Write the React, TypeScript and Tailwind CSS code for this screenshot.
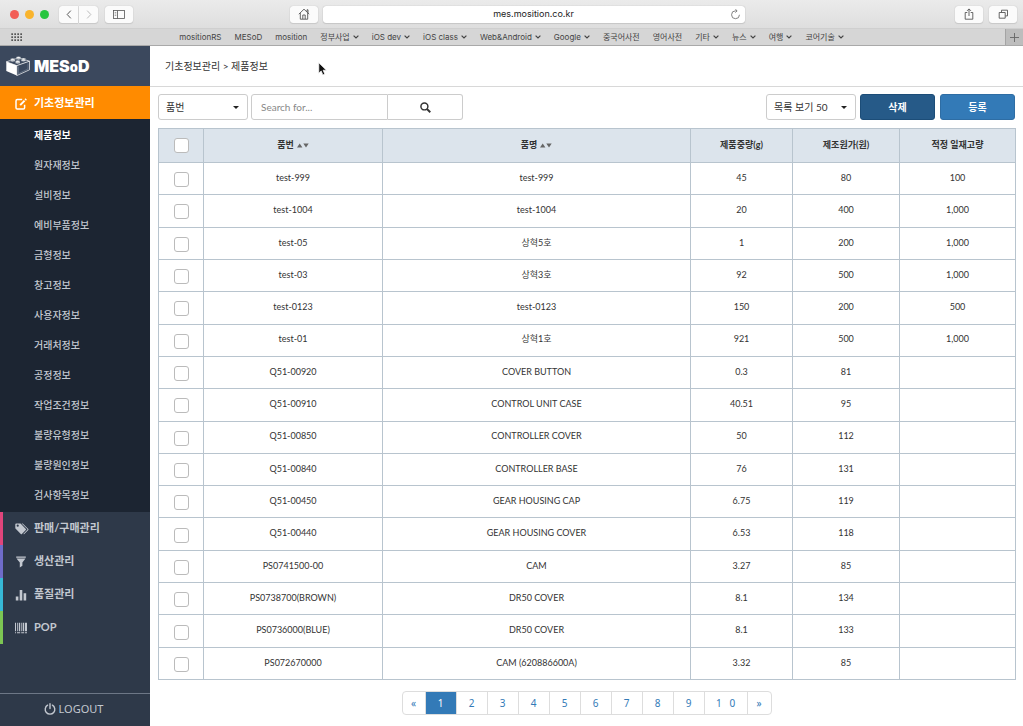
import type { ReactNode } from "react";

type Bookmark = { label: string; menu?: boolean };

const bookmarks: Bookmark[] = [
  { label: "mositionRS" },
  { label: "MESoD" },
  { label: "mosition" },
  { label: "정부사업", menu: true },
  { label: "iOS dev", menu: true },
  { label: "iOS class", menu: true },
  { label: "Web&Android", menu: true },
  { label: "Google", menu: true },
  { label: "중국어사전" },
  { label: "영어사전" },
  { label: "기타", menu: true },
  { label: "뉴스", menu: true },
  { label: "여행", menu: true },
  { label: "코어기술", menu: true },
];

const subMenu = [
  "제품정보",
  "원자재정보",
  "설비정보",
  "예비부품정보",
  "금형정보",
  "창고정보",
  "사용자정보",
  "거래처정보",
  "공정정보",
  "작업조건정보",
  "불량유형정보",
  "불량원인정보",
  "검사항목정보",
];

const rows: string[][] = [
  ["test-999", "test-999", "45", "80", "100"],
  ["test-1004", "test-1004", "20", "400", "1,000"],
  ["test-05", "상혁5호", "1", "200", "1,000"],
  ["test-03", "상혁3호", "92", "500", "1,000"],
  ["test-0123", "test-0123", "150", "200", "500"],
  ["test-01", "상혁1호", "921", "500", "1,000"],
  ["Q51-00920", "COVER BUTTON", "0.3", "81", ""],
  ["Q51-00910", "CONTROL UNIT CASE", "40.51", "95", ""],
  ["Q51-00850", "CONTROLLER COVER", "50", "112", ""],
  ["Q51-00840", "CONTROLLER BASE", "76", "131", ""],
  ["Q51-00450", "GEAR HOUSING CAP", "6.75", "119", ""],
  ["Q51-00440", "GEAR HOUSING COVER", "6.53", "118", ""],
  ["PS0741500-00", "CAM", "3.27", "85", ""],
  ["PS0738700(BROWN)", "DR50 COVER", "8.1", "134", ""],
  ["PS0736000(BLUE)", "DR50 COVER", "8.1", "133", ""],
  ["PS072670000", "CAM (620886600A)", "3.32", "85", ""],
];

const columns = [
  { label: "품번", sortable: true },
  { label: "품명", sortable: true },
  { label: "제품중량(g)", sortable: false },
  { label: "제조원가(원)", sortable: false },
  { label: "적정 일재고량", sortable: false },
];

function ToolbarButton({ label, className, children }: { label: string; className: string; children: ReactNode }) {
  return (
    <button
      aria-label={label}
      className={`flex h-[17px] items-center justify-center bg-[#fbfbfb] text-[#555] shadow-[0_0_1px_#aaa,0_1px_1px_#ccc] ${className}`}
    >
      {children}
    </button>
  );
}

function BrowserChrome() {
  return (
    <header className="font-['Inter','Noto_Sans_CJK_KR',sans-serif]">
      <div className="flex h-7 items-center bg-linear-to-b from-[#ebebeb] to-[#dedede] pr-[6px] pl-[10px]">
        <div className="flex flex-1 items-center">
          <div className="flex gap-[6px]">
            <span className="size-[9px] rounded-full bg-[#f25e57]" />
            <span className="size-[9px] rounded-full bg-[#f9b42d]" />
            <span className="size-[9px] rounded-full bg-[#27c53f]" />
          </div>
          <div className="ml-[10px] flex gap-px">
            <ToolbarButton label="뒤로" className="w-[19px] rounded-l-[3px]">
              <svg viewBox="0 0 6 10" className="h-[9px] w-[6px]" fill="none" stroke="currentColor" strokeWidth="1.1">
                <path d="M5 .7 1 5l4 4.3" />
              </svg>
            </ToolbarButton>
            <ToolbarButton label="앞으로" className="w-[19px] rounded-r-[3px]">
              <svg viewBox="0 0 6 10" className="h-[9px] w-[6px]" fill="none" stroke="#bbb" strokeWidth="1.1">
                <path d="m1 .7 4 4.3-4 4.3" />
              </svg>
            </ToolbarButton>
          </div>
          <ToolbarButton label="사이드바" className="ml-[7px] w-[28px] rounded-[3px]">
            <svg viewBox="0 0 12 9" className="h-[9px] w-[12px]" fill="none" stroke="currentColor" strokeWidth=".8">
              <rect x=".5" y=".5" width="11" height="8" />
              <path d="M4.5.5v8" />
              <path d="M1.7 2.5h1.6M1.7 4h1.6M1.7 5.5h1.6" strokeWidth=".5" />
            </svg>
          </ToolbarButton>
        </div>
        <ToolbarButton label="홈" className="ml-2 w-[28px] rounded-[3px]">
          <svg viewBox="0 0 12 12" className="size-[12px]" fill="none" stroke="currentColor" strokeWidth=".9">
            <path d="M.8 6.2 6 1.2l5.2 5M2.3 5v6.2h7.4V5M9 4V1.8h1V5M4.8 11V7h2.4v4" />
          </svg>
        </ToolbarButton>
        <div className="ml-[5px] flex h-[17px] w-[42%] items-center rounded-[3px] bg-white pr-[4px] shadow-[0_0_1px_#999,0_1px_1px_#ccc]">
          <input
            aria-label="주소"
            defaultValue="mes.mosition.co.kr"
            className="min-w-0 flex-1 bg-transparent pl-[14px] text-center text-[9px] text-[#222] outline-none"
          />
          <button aria-label="새로 고침" className="text-[#777]">
            <svg viewBox="0 0 12 12" className="size-[11px]" fill="none" stroke="currentColor" strokeWidth="1">
              <path d="M10.3 6.3A4.3 4.3 0 1 1 6 2h1.6M5.8.2l2 1.8-2 1.9" />
            </svg>
          </button>
        </div>
        <div className="flex flex-1 justify-end gap-[6px]">
          <ToolbarButton label="공유" className="w-[28px] rounded-[3px]">
            <svg viewBox="0 0 10 12" className="h-[12px] w-[10px]" fill="none" stroke="currentColor" strokeWidth=".9">
              <path d="M3.3 4.5H1.2v6.7h7.6V4.5H6.7M5 8V1M3 2.9l2-2 2 2" />
            </svg>
          </ToolbarButton>
          <ToolbarButton label="탭 보기" className="w-[28px] rounded-[3px]">
            <svg viewBox="0 0 11 10" className="h-[10px] w-[11px]" fill="none" stroke="currentColor" strokeWidth=".9">
              <path d="M1.2 3.5h6v5.7h-6zM3.5 3.3V1.2h6v5.7H7.4" />
            </svg>
          </ToolbarButton>
        </div>
      </div>
      <div className="flex h-[18px] items-stretch border-t border-b border-t-[#cfcfcf] border-b-[#a9a9a9] bg-[#d6d6d6]">
        <button aria-label="즐겨찾기" className="w-[18px] pl-[11px]">
          <svg viewBox="0 0 12 9" className="h-[9px] w-[12px]" fill="#555">
            {[0, 1, 2].map((y) =>
              [0, 1, 2, 3].map((x) => <rect key={`${x}-${y}`} x={x * 3 + 0.3} y={y * 3 + 0.3} width="1.7" height="1.7" />),
            )}
          </svg>
        </button>
        <nav className="flex flex-1 items-center justify-center gap-[13px] text-[8px] text-[#444]">
          {bookmarks.map((b) => (
            <a key={b.label} href="#" className="flex items-center gap-[3px] whitespace-nowrap">
              {b.label}
              {b.menu && (
                <svg viewBox="0 0 6 4" className="h-[4px] w-[6px]" fill="none" stroke="currentColor" strokeWidth="1.2">
                  <path d="m.6.6 2.4 2.4L5.4.6" />
                </svg>
              )}
            </a>
          ))}
        </nav>
        <button aria-label="새 탭" className="flex w-[18px] items-center justify-center border-l border-[#a4a4a4] bg-[#bdbdbd]">
          <svg viewBox="0 0 9 9" className="size-[9px]" stroke="#666" strokeWidth=".9">
            <path d="M4.5 0v9M0 4.5h9" />
          </svg>
        </button>
      </div>
    </header>
  );
}

function BrickLogo() {
  return (
    <svg viewBox="0 0 24 20" className="h-[20px] w-[24px]">
      <path d="M.3 5.8 10.8 9.6v10L.3 15z" fill="#fff" />
      <path d="M.3 5.8 13 1.8l10.5 3.4v8.6L10.8 19.6v-10z" fill="none" stroke="#fff" strokeWidth=".7" strokeLinejoin="round" />
      <path d="M10.8 9.6 23.5 5.2" stroke="#fff" strokeWidth=".8" fill="none" />
      <path d="M12.4 10.6v7l9.6-4.6V7.4" stroke="#8592a6" strokeWidth=".5" fill="none" />
      <g fill="#fff" stroke="#3b485d" strokeWidth=".4">
        <path d="M10.2 1.5v1.3c0 1.2 4.6 1.2 4.6 0V1.5z" />
        <ellipse cx="12.5" cy="1.4" rx="2.3" ry="1" />
        <path d="M4.4 3.4v1.4c0 1.2 4.6 1.2 4.6 0V3.4z" />
        <ellipse cx="6.7" cy="3.3" rx="2.3" ry="1" />
        <path d="M15.2 3.2v1.4c0 1.2 4.6 1.2 4.6 0V3.2z" />
        <ellipse cx="17.5" cy="3.1" rx="2.3" ry="1" />
        <path d="M9.4 5.4v1.4c0 1.2 4.6 1.2 4.6 0V5.4z" />
        <ellipse cx="11.7" cy="5.3" rx="2.3" ry="1" />
      </g>
    </svg>
  );
}

const mainMenu: { label: string; accent: string; icon: ReactNode }[] = [
  {
    label: "판매/구매관리",
    accent: "border-[#e0457b]",
    icon: (
      <svg viewBox="0 0 14 12" className="h-[12px] w-[14px]" fill="currentColor">
        <path
          fillRule="evenodd"
          d="M.3 1.3c0-.5.3-.9.8-.9h3.8c.3 0 .7.1.9.4l5 5.1c.3.3.3.8 0 1.1l-3.9 4c-.3.3-.8.3-1.1 0L.7 5.8a1.2 1.2 0 0 1-.4-.9zm2.4.3a1.1 1.1 0 1 0 0 2.2 1.1 1.1 0 0 0 0-2.2z"
        />
        <path d="M6.6.5h.7c.3 0 .6.1.9.4l5.1 5c.3.3.3.8 0 1.1l-4 4c-.3.3-.7.3-1 .1l4-4.3c.2-.2.2-.5 0-.8z" />
      </svg>
    ),
  },
  {
    label: "생산관리",
    accent: "border-[#6f6cc9]",
    icon: (
      <svg viewBox="0 0 12 12" className="size-[12px]" fill="currentColor">
        <path d="M1.2.6h9.6v1.2H1.2zM1.5 2.4h9L7.4 6.6v3.2L4.8 11.6v-5z" />
      </svg>
    ),
  },
  {
    label: "품질관리",
    accent: "border-[#36b8d6]",
    icon: (
      <svg viewBox="0 0 12 12" className="size-[12px]" fill="currentColor">
        <path d="M.8 7.5h2.6v4H.8zM4.7 1h2.6v10.5H4.7zM8.6 4.3h2.6v7.2H8.6z" />
      </svg>
    ),
  },
  {
    label: "POP",
    accent: "border-[#7cc653]",
    icon: (
      <svg viewBox="0 0 12 12" className="size-[12px]" fill="currentColor">
        <path d="M0 .8h1v8.4H0zM2 .8h.8v8.4H2zM3.8.8h1.4v8.4H3.8zM6.2.8h.7v8.4h-.7zM7.7.8h1.5v8.4H7.7zM10 .8h2v8.4h-2zM0 10.2h1v1H0zM2 10.2h3.2v1H2zM6.2 10.2h3v1h-3zM10 10.2h2v1h-2z" />
      </svg>
    ),
  },
];

function Sidebar() {
  return (
    <aside className="flex w-[150px] shrink-0 flex-col bg-[#2e3949] text-[#c3c8d0]">
      <a href="#" className="flex h-10 items-center gap-[4px] bg-[#3b485d] pl-[6px] text-white">
        <BrickLogo />
        <span className="font-['Inter',sans-serif] text-[16px] font-black">
          MES<span className="text-[13px]">o</span>D
        </span>
      </a>
      <a href="#" className="flex h-[33px] items-center gap-[7px] bg-[#ff8b00] pt-[2px] pl-[15px] text-[11px] font-bold text-white">
        <svg viewBox="0 0 12 12" className="size-[12px]" fill="none" stroke="currentColor" strokeWidth="1.5">
          <path d="M7.2 1.6H2.3a1.3 1.3 0 0 0-1.3 1.3v6.8A1.3 1.3 0 0 0 2.3 11h6a1.3 1.3 0 0 0 1.3-1.3V6.8" />
          <path d="M5.2 7.1 9.6 2.6" strokeWidth="2" />
          <path d="m10.2 2 1-1" strokeWidth="2" />
        </svg>
        기초정보관리
      </a>
      <ul className="bg-[#1c2532] pt-px pb-[2px] text-[10px] font-medium">
        {subMenu.map((item, i) => (
          <li key={item}>
            <a href="#" className={`flex h-[30px] items-center pl-[34px] ${i === 0 ? "font-bold text-white" : "text-[#c3c8d0]"}`}>
              {item}
            </a>
          </li>
        ))}
      </ul>
      <nav className="flex-1">
        {mainMenu.map((m) => (
          <a key={m.label} href="#" className={`flex h-[33px] items-center border-l-[3px] pl-[12px] text-[11px] font-bold ${m.accent}`}>
            <span className="flex w-[19px] items-center">{m.icon}</span>
            {m.label}
          </a>
        ))}
      </nav>
      <button className="flex h-[33px] items-center justify-center gap-[3px] border-t border-[#6d7786] pr-[3px] pb-[2px] font-['Noto_Sans',sans-serif] text-[11px]">
        <svg viewBox="0 0 12 12" className="size-[12px]" fill="none" stroke="currentColor" strokeWidth="1.4" strokeLinecap="round">
          <path d="M3.6 2.2a4.8 4.8 0 1 0 4.8 0M6 .8v4.8" />
        </svg>
        LOGOUT
      </button>
    </aside>
  );
}

function Dropdown({ label, value }: { label: string; value: string }) {
  return (
    <div className="relative w-[90px]">
      <select
        aria-label={label}
        className="block h-[26px] w-full appearance-none rounded-[3px] border border-[#ccc] bg-white pl-[7px] text-[10px] font-normal text-[#333]"
      >
        <option>{value}</option>
      </select>
      <svg viewBox="0 0 6 3" className="pointer-events-none absolute top-[12px] right-[9px] h-[3px] w-[6px]" fill="#222">
        <path d="M0 0h6L3 3z" />
      </svg>
    </div>
  );
}

function Check({ label }: { label: string }) {
  return (
    <input
      type="checkbox"
      aria-label={label}
      className="mx-auto block size-[15px] appearance-none rounded-[3px] border border-[#bbb] bg-white checked:bg-[#337ab7]"
    />
  );
}

function ProductTable() {
  return (
    <table className="w-full table-fixed border-collapse text-center text-[9px] text-[#333]">
      <colgroup>
        <col className="w-[45px]" />
        <col className="w-[179px]" />
        <col className="w-[308px]" />
        <col className="w-[102px]" />
        <col className="w-[107px]" />
        <col className="w-[116px]" />
      </colgroup>
      <thead>
        <tr className="h-[34px] bg-[#dce4ec]">
          <th className="border border-[#b8c4ce] p-0">
            <Check label="전체 선택" />
          </th>
          {columns.map((c) => (
            <th key={c.label} className="border border-[#b8c4ce] p-0 pb-[2px] font-bold">
              {c.label}
              {c.sortable && (
                <svg viewBox="0 0 12 5" className="ml-[3px] inline h-[5px] w-[12px] align-baseline" fill="#666">
                  <path d="M0 4.5h5.4L2.7.5zM6.3.5h5.4L9 4.5z" />
                </svg>
              )}
            </th>
          ))}
        </tr>
      </thead>
      <tbody>
        {rows.map((r) => (
          <tr key={r[0]}>
            <td className="border border-[#b8c4ce] p-0 pt-[2px]">
              <Check label={r[0]} />
            </td>
            {r.map((cell, i) => (
              <td key={i} className="border border-[#b8c4ce] p-0 pb-[2px]">
                {cell}
              </td>
            ))}
          </tr>
        ))}
      </tbody>
    </table>
  );
}

function Pagination() {
  const pages = ["1", "2", "3", "4", "5", "6", "7", "8", "9"];
  return (
    <nav className="mt-[11px] flex justify-center font-['Noto_Sans',sans-serif] text-[10px] text-[#337ab7]">
      <div className="flex h-[24px] divide-x divide-[#ddd] overflow-hidden rounded-[4px] border border-[#ddd]">
        <a href="#" aria-label="이전" className="flex w-[23px] items-center justify-center">
          «
        </a>
        {pages.map((p) => (
          <a key={p} href="#" className={`flex w-[31px] items-center justify-center ${p === "1" ? "bg-[#337ab7] text-white" : ""}`}>
            {p}
          </a>
        ))}
        <a href="#" className="flex w-[43px] items-center justify-center whitespace-pre">
          {"1   0"}
        </a>
        <a href="#" aria-label="다음" className="flex w-[23px] items-center justify-center">
          »
        </a>
      </div>
    </nav>
  );
}

export default function App() {
  return (
    <div className="flex min-h-screen flex-col bg-white font-['Lato','Noto_Sans_CJK_KR',sans-serif]">
      <BrowserChrome />
      <div className="flex flex-1">
        <Sidebar />
        <main className="flex min-w-0 flex-1 flex-col">
          <div className="relative flex h-[41px] items-center border-b border-[#d8d8d8] pl-[15px] text-[10px] text-[#333]">
            기초정보관리 &gt; 제품정보
            <svg viewBox="0 0 9 14" className="absolute top-[16px] left-[168px] h-[14px] w-[9px]" fill="#111" stroke="#fff" strokeWidth=".7">
              <path d="M.8.8v10.4l2.4-2.3 1.7 4 1.9-.8-1.7-3.9h3.3z" />
            </svg>
          </div>
          <div className="flex flex-1 flex-col px-2 pt-[7px] pb-[11px]">
            <div className="flex h-[26px] items-stretch justify-between">
              <form className="flex gap-[3px]">
                <Dropdown label="검색 항목" value="품번" />
                <div className="flex">
                  <input
                    aria-label="검색어"
                    placeholder="Search for..."
                    className="w-[137px] rounded-l-[3px] border border-[#ccc] px-[9px] text-[10px] placeholder:text-[#888]"
                  />
                  <button
                    type="button"
                    aria-label="검색"
                    className="flex w-[75px] items-center justify-center rounded-r-[3px] border border-l-0 border-[#ccc] text-[#333]"
                  >
                    <svg viewBox="0 0 12 12" className="size-[11px]" fill="none" stroke="currentColor" strokeWidth="1.6">
                      <circle cx="4.8" cy="4.8" r="3.8" />
                      <path d="m7.6 7.6 3.6 3.6" strokeWidth="2.1" />
                    </svg>
                  </button>
                </div>
              </form>
              <div className="flex text-[10px] font-bold text-white">
                <Dropdown label="목록 보기" value="목록 보기 50" />
                <button className="ml-[4px] w-[75px] rounded-[3px] border border-[#1c4d78] bg-[#265a88]">삭제</button>
                <button className="ml-[5px] w-[75px] rounded-[3px] border border-[#2e6da4] bg-[#337ab7]">등록</button>
              </div>
            </div>
            <div className="mt-[8px] flex flex-1">
              <ProductTable />
            </div>
            <Pagination />
          </div>
        </main>
      </div>
    </div>
  );
}
